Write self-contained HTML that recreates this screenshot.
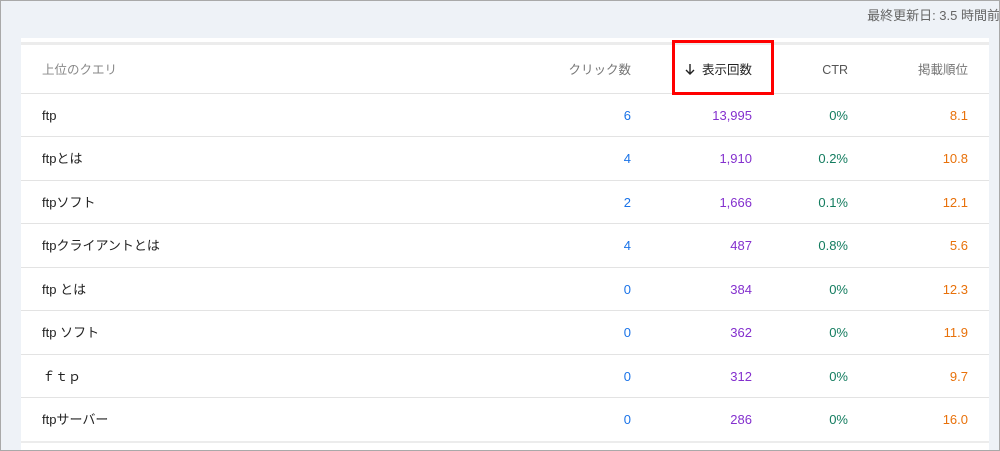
<!DOCTYPE html>
<html><head><meta charset="utf-8"><style>
html,body{margin:0;width:1000px;height:451px;overflow:hidden}
body{background:#eef2f7;font-family:"Liberation Sans","Noto Sans CJK JP",sans-serif;position:relative}
.frame{position:absolute;left:0;top:0;width:998px;height:449px;border:1px solid #a9a9a9;}
.upd{position:absolute;right:0;top:8px;font-size:13px;line-height:16px;color:#666;white-space:nowrap}
.card{position:absolute;left:21px;top:38px;width:968px;height:413px;background:#fff;overflow:hidden}
.row{position:absolute;left:0;width:968px;border-top:1px solid #e3e3e3;font-size:13px;height:43px}
.row span{position:absolute;top:14px;line-height:16px;height:16px;white-space:nowrap}
.q{left:21px;color:#222}
.c{right:358px;color:#1a73e8}
.i{right:237px;color:#8430ce}
.t{right:141px;color:#137c5f}
.p{right:21px;color:#e8710a}
.h span{font-size:12.5px;top:17px}
.box{position:absolute;left:672px;top:40px;width:96px;height:49px;border:3px solid #f00}
</style></head><body>
<div class="upd">最終更新日: 3.5 時間前</div>
<div class="card">
<div class="row h" style="top:4px;height:50px;border-top:3px solid #ececec"><span class="q" style="color:#888">上位のクエリ</span><span class="c" style="color:#757575">クリック数</span><span class="i" style="color:#222"><svg width="10" height="12" viewBox="0 0 10 12" style="vertical-align:-1px;margin-right:7px"><path d="M5 1V11M1 7L5 11L9 7" stroke="#222" stroke-width="1.4" fill="none"/></svg>表示回数</span><span class="t" style="color:#555">CTR</span><span class="p" style="color:#757575">掲載順位</span></div>
<div class="row" style="top:55px"><span class="q">ftp</span><span class="c">6</span><span class="i">13,995</span><span class="t">0%</span><span class="p">8.1</span></div>
<div class="row" style="top:98px"><span class="q">ftpとは</span><span class="c">4</span><span class="i">1,910</span><span class="t">0.2%</span><span class="p">10.8</span></div>
<div class="row" style="top:142px"><span class="q">ftpソフト</span><span class="c">2</span><span class="i">1,666</span><span class="t">0.1%</span><span class="p">12.1</span></div>
<div class="row" style="top:185px"><span class="q">ftpクライアントとは</span><span class="c">4</span><span class="i">487</span><span class="t">0.8%</span><span class="p">5.6</span></div>
<div class="row" style="top:229px"><span class="q">ftp とは</span><span class="c">0</span><span class="i">384</span><span class="t">0%</span><span class="p">12.3</span></div>
<div class="row" style="top:272px"><span class="q">ftp ソフト</span><span class="c">0</span><span class="i">362</span><span class="t">0%</span><span class="p">11.9</span></div>
<div class="row" style="top:316px"><span class="q">ｆｔｐ</span><span class="c">0</span><span class="i">312</span><span class="t">0%</span><span class="p">9.7</span></div>
<div class="row" style="top:359px"><span class="q">ftpサーバー</span><span class="c">0</span><span class="i">286</span><span class="t">0%</span><span class="p">16.0</span></div>
<div class="row" style="top:403px;height:20px;border-top:2px solid #ececec"></div>
</div>
<div class="box"></div>
<div class="frame"></div>
</body></html>
